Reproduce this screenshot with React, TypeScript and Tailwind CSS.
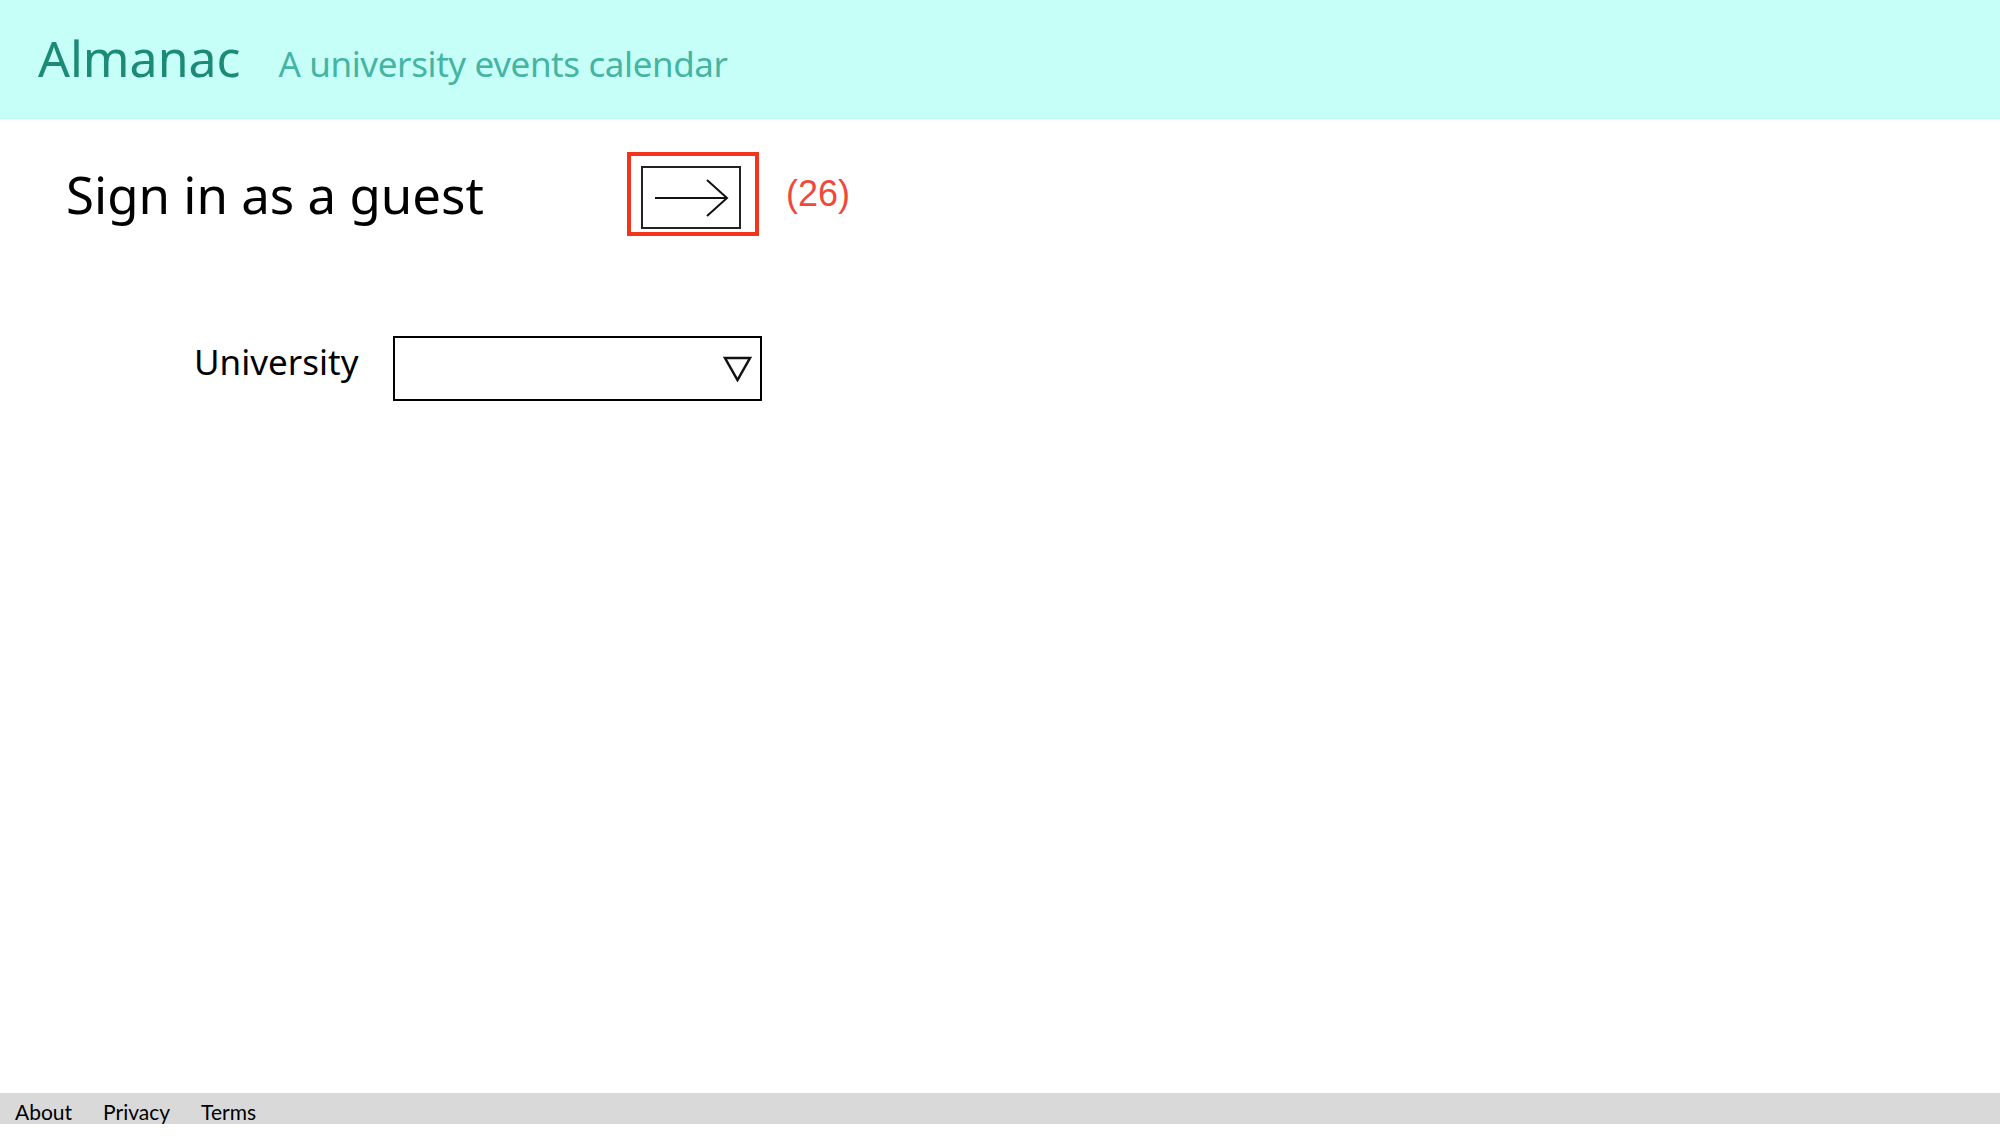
import { useState } from "react";

export default function App() {
  const [university, setUniversity] = useState("");

  return (
    <div className="flex flex-col h-[1138px] bg-white font-['Noto_Sans',sans-serif]">
      {/* Header */}
      <header className="h-[119px] bg-[#c6fff8] flex items-baseline pl-[38px] pt-[33px] gap-[38px] shrink-0">
        <span className="text-[50px] leading-none text-[#1b8b77]">Almanac</span>
        <span className="text-[35px] leading-none tracking-[-0.4px] text-[#45b4a2]">A university events calendar</span>
      </header>

      {/* Guest sign in */}
      <div className="flex items-center pl-[66px] mt-[33px]">
        <h1 className="text-[51px] leading-none text-black w-[561px]">Sign in as a guest</h1>
        <button
          className="w-[132px] h-[84px] border-4 border-[#f3341c] px-[10px] pt-[7px] cursor-pointer"
          aria-label="Sign in"
        >
          <div className="w-[100px] h-[63px] border-2 border-[#222]">
            <svg width="96" height="59" viewBox="0 0 96 59" fill="none" stroke="#111" strokeWidth="2">
              <line x1="12" y1="30" x2="84" y2="30" />
              <polyline points="64,12 84,30 64,48" />
            </svg>
          </div>
        </button>
        <span className="ml-[27px] text-[36px] leading-none text-[#f0483a] font-['Liberation_Sans',Arial,sans-serif]">(26)</span>
      </div>

      {/* University select */}
      <div className="flex items-start pl-[194px] mt-[100px] gap-[34px]">
        <label className="text-[35px] leading-none text-black mt-[8px]">University</label>
        <div className="relative w-[369px] h-[65px] border-2 border-black flex items-center justify-end pr-[8px]">
          <select
            value={university}
            onChange={(e) => setUniversity(e.target.value)}
            className="absolute inset-0 opacity-0 cursor-pointer"
          >
            <option value=""></option>
          </select>
          <svg width="29" height="26" viewBox="0 0 29 26" fill="none" stroke="#111" strokeWidth="2.5">
            <polygon points="2,2 27,2 14.5,24" strokeLinejoin="miter" />
          </svg>
        </div>
      </div>

      {/* Footer */}
      <footer className="mt-auto mb-[14px] h-[31px] bg-[#d9d9d9] flex gap-[31px] pl-[15px] pt-[8px] font-['Lato',sans-serif] text-[21px] leading-none text-black shrink-0">
        <a href="#">About</a>
        <a href="#">Privacy</a>
        <a href="#">Terms</a>
      </footer>
    </div>
  );
}
